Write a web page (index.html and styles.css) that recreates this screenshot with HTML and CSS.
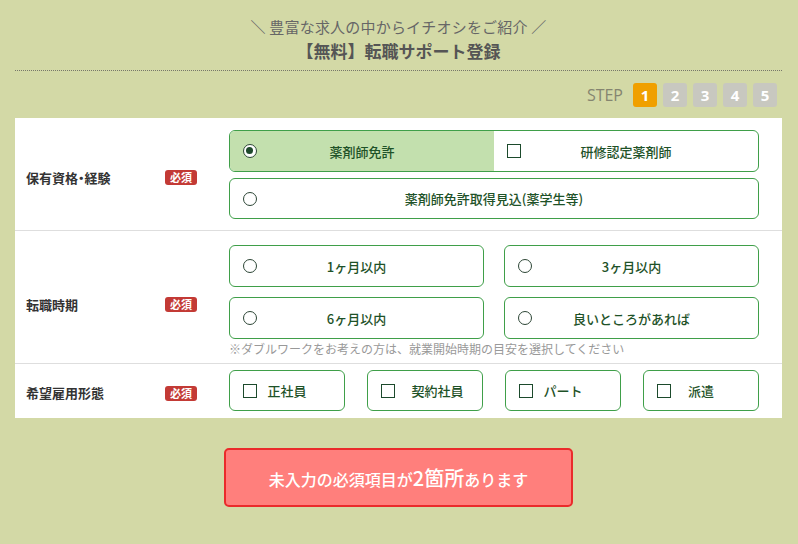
FILE: index.html
```html
<!DOCTYPE html>
<html lang="ja">
<head>
    <meta charset="UTF-8">
    <title>転職サポート登録</title>
    <link rel="stylesheet" href="styles.css">
</head>
<body>
    <div class="page">
        <header class="head">
            <p class="lead">＼ 豊富な求人の中からイチオシをご紹介 ／</p>
            <h1 class="title">【無料】転職サポート登録</h1>
        </header>

        <div class="steps">
            <span class="steps-label">STEP</span>
            <span class="step current">1</span>
            <span class="step">2</span>
            <span class="step">3</span>
            <span class="step">4</span>
            <span class="step">5</span>
        </div>

        <form class="panel">
            <div class="row row-license">
                <div class="row-label">保有資格・経験</div>
                <div class="row-badge"><span class="req">必須</span></div>
                <div class="opts">
                    <div class="pair">
                        <label class="opt checked"><span class="radio"></span><span class="opt-text">薬剤師免許</span></label>
                        <label class="opt"><span class="check"></span><span class="opt-text">研修認定薬剤師</span></label>
                    </div>
                    <label class="opt boxed"><span class="radio"></span><span class="opt-text">薬剤師免許取得見込(薬学生等)</span></label>
                </div>
            </div>

            <div class="row row-timing">
                <div class="row-label">転職時期</div>
                <div class="row-badge"><span class="req">必須</span></div>
                <div class="opts">
                    <div class="grid2">
                        <label class="opt boxed"><span class="radio"></span><span class="opt-text">1ヶ月以内</span></label>
                        <label class="opt boxed"><span class="radio"></span><span class="opt-text">3ヶ月以内</span></label>
                        <label class="opt boxed"><span class="radio"></span><span class="opt-text">6ヶ月以内</span></label>
                        <label class="opt boxed"><span class="radio"></span><span class="opt-text">良いところがあれば</span></label>
                    </div>
                    <p class="note">※ダブルワークをお考えの方は、就業開始時期の目安を選択してください</p>
                </div>
            </div>

            <div class="row row-type">
                <div class="row-label">希望雇用形態</div>
                <div class="row-badge"><span class="req">必須</span></div>
                <div class="grid4">
                    <label class="opt boxed"><span class="check"></span><span class="opt-text">正社員</span></label>
                    <label class="opt boxed wide"><span class="check"></span><span class="opt-text">契約社員</span></label>
                    <label class="opt boxed"><span class="check"></span><span class="opt-text">パート</span></label>
                    <label class="opt boxed"><span class="check"></span><span class="opt-text">派遣</span></label>
                </div>
            </div>
        </form>

        <div class="submit-wrap">
            <button type="button" class="submit">未入力の必須項目が<span class="count">2箇所</span>あります</button>
        </div>
    </div>
</body>
</html>
```

FILE: styles.css
```css
body {
    margin: 0;
    background: #d3d9a6;
    font-family: "Noto Sans CJK JP", "Noto Sans", sans-serif;
    color: #333;
}
.page {
    padding: 0 16px 0 15px;
}
.head {
    text-align: center;
    padding-top: 15px;
    padding-bottom: 7px;
    border-bottom: 1px dotted #77776a;
}
.lead {
    margin: 0;
    font-size: 15px;
    line-height: 24px;
    color: #666;
    letter-spacing: 0.2px;
}
.title {
    margin: 0;
    font-size: 17px;
    line-height: 24px;
    font-weight: bold;
    color: #555;
}
.steps {
    display: flex;
    justify-content: flex-end;
    align-items: center;
    gap: 6px;
    padding: 12px 5px 11px 0;
}
.steps-label {
    font-family: "Open Sans", "Noto Sans", sans-serif;
    font-size: 16px;
    color: #858570;
    margin-right: 4px;
}
.step {
    width: 24px;
    height: 24px;
    border-radius: 3px;
    background: #c8c8c0;
    color: #fff;
    font-family: "Open Sans", sans-serif;
    font-weight: bold;
    font-size: 15px;
    line-height: 24px;
    text-align: center;
}
.step.current {
    background: #f0a000;
}
.panel {
    background: #fff;
}
.row {
    display: grid;
    grid-template-columns: 139px 64px 530px;
    align-items: center;
    padding: 0 23px 0 11px;
    border-bottom: 1px solid #dedede;
}
.row:last-child {
    border-bottom: none;
}
.row-license {
    padding-top: 12px;
    padding-bottom: 11px;
}
.row-timing {
    padding-top: 14px;
    padding-bottom: 5px;
}
.row-type {
    padding-top: 6px;
    padding-bottom: 7px;
}
.row-label {
    font-size: 13px;
    font-weight: bold;
    color: #333;
    padding-top: 6px;
    font-feature-settings: "palt";
}
.row-type .row-label {
    padding-top: 4px;
}
.req {
    display: inline-block;
    background: #c33a35;
    color: #fff;
    font-size: 11px;
    font-weight: bold;
    line-height: 15px;
    padding: 0 5px;
    border-radius: 3px;
}
.opts {
    display: flex;
    flex-direction: column;
    gap: 6px;
}
.pair {
    display: flex;
    border: 1px solid #3f9f49;
    border-radius: 6px;
    overflow: hidden;
}
.pair .opt {
    flex: 1;
    height: 40px;
}
.opt {
    display: flex;
    align-items: center;
    height: 40px;
    padding: 0 13px;
    box-sizing: border-box;
    font-size: 13px;
    font-weight: 500;
    color: #1e5228;
    cursor: pointer;
}
.opt::after {
    content: "";
    width: 14px;
    flex-shrink: 0;
}
.opt.boxed {
    border: 1px solid #3f9f49;
    border-radius: 6px;
    height: 41px;
}
.opt.checked {
    background: #c3e0ae;
}
.opt-text {
    flex: 1;
    text-align: center;
    white-space: nowrap;
}
.radio {
    width: 14px;
    height: 14px;
    box-sizing: border-box;
    border: 1.5px solid #2d4636;
    border-radius: 50%;
    flex-shrink: 0;
    background: #fff;
    position: relative;
}
.checked .radio::before {
    content: "";
    position: absolute;
    left: 2px;
    top: 2px;
    width: 7px;
    height: 7px;
    border-radius: 50%;
    background: #1f4a2c;
}
.check {
    width: 14px;
    height: 14px;
    box-sizing: border-box;
    border: 1.5px solid #1c4a2c;
    flex-shrink: 0;
}
.grid2 {
    display: grid;
    grid-template-columns: 255px 255px;
    column-gap: 20px;
    row-gap: 10px;
}
.grid2 .opt.boxed {
    height: 42px;
}
.note {
    margin: -5px 0 0;
    font-size: 12px;
    line-height: 18px;
    color: #999;
}
.grid4 {
    display: grid;
    grid-template-columns: repeat(4, 116px);
    column-gap: 22px;
}
.grid4 .opt.boxed {
    padding: 0 13px;
}
.grid4 .opt.wide .opt-text {
    padding-left: 11px;
}
.grid4 .opt.wide::after {
    width: 0;
}
.submit-wrap {
    display: flex;
    justify-content: center;
    padding-top: 30px;
}
.submit {
    width: 349px;
    height: 59px;
    background: #ff7f7c;
    border: 2px solid #ea2b2b;
    border-radius: 5px;
    color: #fff;
    font-family: "Noto Sans CJK JP", sans-serif;
    font-size: 16px;
    font-weight: 500;
    cursor: pointer;
}
.count {
    font-size: 20px;
}
```
